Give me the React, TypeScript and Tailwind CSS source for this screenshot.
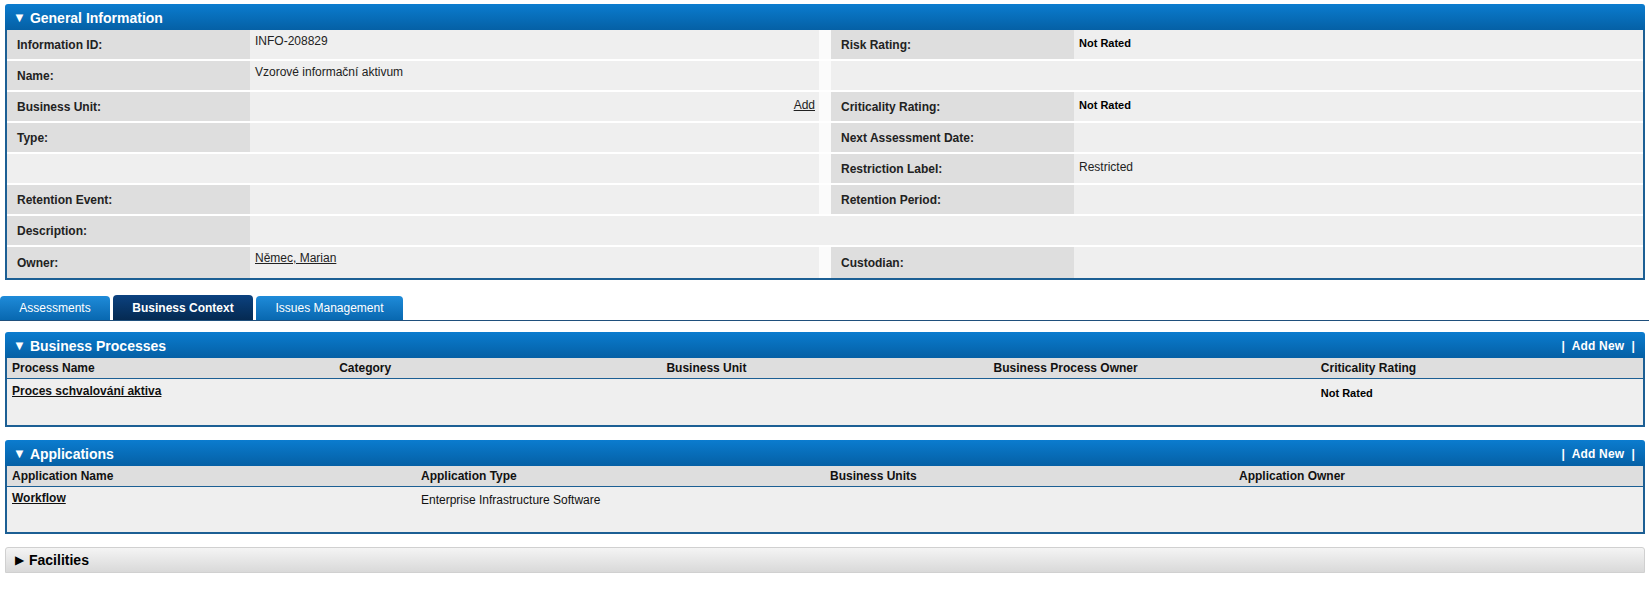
import React from "react";

const font = { fontFamily: '"Liberation Sans", Arial, sans-serif' };

function PanelHeader({ title, addNew }: { title: string; addNew?: boolean }) {
  return (
    <div className="h-[26px] flex items-center justify-between rounded-t-[3px] bg-gradient-to-b from-[#0b7ccf] to-[#0560a5] pl-[8px] pr-[10px] pt-[1px]">
      <div className="text-white font-bold text-[14px] leading-none flex items-center">
        <span className="text-[13px] mr-[4px]">▼</span>
        {title}
      </div>
      {addNew && (
        <div className="text-white font-bold text-[12px] leading-none tracking-[0.2px]">
          |&nbsp; Add New &nbsp;|
        </div>
      )}
    </div>
  );
}

function Label({ children }: { children?: React.ReactNode }) {
  return (
    <div className="w-[243px] shrink-0 bg-[#dedede] pl-[10px] flex items-center text-[12px] font-bold text-[#222]">
      {children}
    </div>
  );
}

function Value({
  children,
  className = "",
  top = false,
}: {
  children?: React.ReactNode;
  className?: string;
  top?: boolean;
}) {
  return (
    <div
      className={
        "bg-[#efefef] pl-[5px] text-[12px] text-[#222] " +
        (top ? "pt-[2px] " : "pt-[4px] ") +
        className
      }
    >
      {children}
    </div>
  );
}

function Rated() {
  return <span className="inline-block pt-[1px] font-bold text-[11px] text-black">Not Rated</span>;
}

function Row({ children }: { children: React.ReactNode }) {
  return <div className="flex h-[31px] border-b-2 border-white">{children}</div>;
}

function Gap() {
  return <div className="w-[12px] shrink-0 bg-[#fbfbfb]" />;
}

export default function App() {
  return (
    <div className="w-[1649px] h-[596px] bg-white" style={font}>
      {/* General Information */}
      <div className="ml-[5px] mr-[4px] pt-[4px]">
        <PanelHeader title="General Information" />
        <div className="border-x-2 border-b-2 border-[#1c5f94] bg-white">
          <Row>
            <Label>Information ID:</Label>
            <Value top className="w-[569px]">INFO-208829</Value>
            <Gap />
            <Label>Risk Rating:</Label>
            <Value className="flex-1">
              <Rated />
            </Value>
          </Row>
          <Row>
            <Label>Name:</Label>
            <Value top className="w-[569px]">Vzorové informační aktivum</Value>
            <Gap />
            <Value className="flex-1" />
          </Row>
          <Row>
            <Label>Business Unit:</Label>
            <Value className="w-[569px] flex justify-end pr-[4px]">
              <span className="underline leading-[18px] h-[18px]">Add</span>
            </Value>
            <Gap />
            <Label>Criticality Rating:</Label>
            <Value className="flex-1">
              <Rated />
            </Value>
          </Row>
          <Row>
            <Label>Type:</Label>
            <Value className="w-[569px]" />
            <Gap />
            <Label>Next Assessment Date:</Label>
            <Value className="flex-1" />
          </Row>
          <Row>
            <Value className="w-[812px]" />
            <Gap />
            <Label>Restriction Label:</Label>
            <Value className="flex-1">Restricted</Value>
          </Row>
          <Row>
            <Label>Retention Event:</Label>
            <Value className="w-[569px]" />
            <Gap />
            <Label>Retention Period:</Label>
            <Value className="flex-1" />
          </Row>
          <Row>
            <Label>Description:</Label>
            <Value className="flex-1" />
          </Row>
          <div className="flex h-[31px]">
            <Label>Owner:</Label>
            <Value top className="w-[569px]">
              <span className="underline">Němec, Marian</span>
            </Value>
            <Gap />
            <Label>Custodian:</Label>
            <Value className="flex-1" />
          </div>
        </div>
      </div>

      {/* Tabs */}
      <div className="mt-[16px] flex items-end gap-[3px] border-b border-[#1f4f7c] h-[25px]">
        <div className="w-[110px] h-[24px] rounded-t-[4px] bg-gradient-to-b from-[#1e8bd9] to-[#0868b0] text-white text-[12px] flex items-center justify-center">
          Assessments
        </div>
        <div className="w-[140px] h-[25px] rounded-t-[4px] bg-gradient-to-b from-[#0c4280] to-[#052a52] text-white text-[12px] font-bold flex items-center justify-center">
          Business Context
        </div>
        <div className="w-[147px] h-[24px] rounded-t-[4px] bg-gradient-to-b from-[#1e8bd9] to-[#0868b0] text-white text-[12px] flex items-center justify-center">
          Issues Management
        </div>
      </div>

      {/* Business Processes */}
      <div className="ml-[5px] mr-[4px] mt-[11px]">
        <PanelHeader title="Business Processes" addNew />
        <div className="border-x-2 border-b-2 border-[#1c5f94]">
          <div className="grid grid-cols-5 h-[21px] bg-[#dedede] border-b border-[#1c5f94] text-[12px] font-bold text-[#111] items-center">
            <div className="pl-[5px]">Process Name</div>
            <div className="pl-[5px]">Category</div>
            <div className="pl-[5px]">Business Unit</div>
            <div className="pl-[5px]">Business Process Owner</div>
            <div className="pl-[5px]">Criticality Rating</div>
          </div>
          <div className="grid grid-cols-5 h-[46px] bg-[#efefef] text-[12px] text-[#111]">
            <div className="pl-[5px] pt-[3px] font-bold underline">Proces schvalování aktiva</div>
            <div />
            <div />
            <div />
            <div className="pl-[5px] pt-[5px]">
              <Rated />
            </div>
          </div>
        </div>
      </div>

      {/* Applications */}
      <div className="ml-[5px] mr-[4px] mt-[13px]">
        <PanelHeader title="Applications" addNew />
        <div className="border-x-2 border-b-2 border-[#1c5f94]">
          <div className="grid grid-cols-4 h-[21px] bg-[#dedede] border-b border-[#1c5f94] text-[12px] font-bold text-[#111] items-center">
            <div className="pl-[5px]">Application Name</div>
            <div className="pl-[5px]">Application Type</div>
            <div className="pl-[5px]">Business Units</div>
            <div className="pl-[5px]">Application Owner</div>
          </div>
          <div className="grid grid-cols-4 h-[45px] bg-[#efefef] text-[12px] text-[#111]">
            <div className="pl-[5px] pt-[2px] font-bold underline">Workflow</div>
            <div className="pl-[5px] pt-[4px]">Enterprise Infrastructure Software</div>
            <div />
            <div />
          </div>
        </div>
      </div>

      {/* Facilities */}
      <div className="ml-[5px] mr-[4px] mt-[13px] h-[26px] rounded-t-[3px] border border-[#d0d0d0] bg-gradient-to-b from-[#f4f4f4] to-[#d9d9d9] flex items-center pl-[9px]">
        <span className="text-[12px] mr-[5px] text-black">▶</span>
        <span className="text-[14px] font-bold text-black">Facilities</span>
      </div>
    </div>
  );
}
